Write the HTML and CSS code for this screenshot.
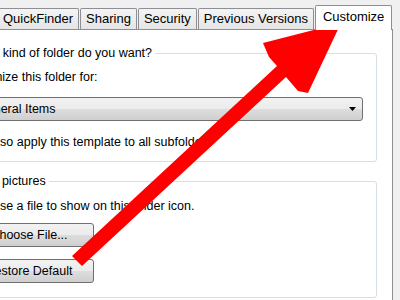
FILE: index.html
```html
<!DOCTYPE html>
<html>
<head>
<meta charset="utf-8">
<title>Customize</title>
<link rel="stylesheet" href="styles.css">
</head>
<body>
<div class="tabs">
  <div class="tab">QuickFinder</div>
  <div class="tab">Sharing</div>
  <div class="tab">Security</div>
  <div class="tab">Previous Versions</div>
  <div class="tab tab-active">Customize</div>
</div>
<div class="panel">
  <fieldset class="group group-kind">
    <legend class="legend legend-kind">What kind of folder do you want?</legend>
    <div class="label">Optimize this folder for:</div>
    <div class="combo">
      <span>General Items</span>
      <svg class="combo-arrow" width="7" height="4" viewBox="0 0 7 4"><polygon points="0,0 7,0 3.5,4" fill="#000"/></svg>
    </div>
    <div class="check"><span class="box"></span>Also apply this template to all subfolders</div>
  </fieldset>
  <fieldset class="group group-pics">
    <legend class="legend legend-pics">Folder pictures</legend>
    <div class="hint">Choose a file to show on this folder icon.</div>
    <button class="btn btn-first">Choose File...</button>
    <button class="btn btn-second">Restore Default</button>
  </fieldset>
</div>
<svg class="arrow" width="400" height="300" viewBox="0 0 400 300">
  <polygon points="341,23 263,43 269,57 277,66 72,256 82,266 286,77 298,91 308,93" fill="#ff0000"/>
</svg>
</body>
</html>
```
FILE: styles.css
```css
html, body {
  margin: 0;
}
body {
  position: relative;
  width: 400px;
  height: 300px;
  overflow: hidden;
  background: #f0f0f0;
  font-family: "Liberation Sans", Arial, sans-serif;
  font-size: 12.5px;
  color: #000;
}
.tabs {
  display: flex;
  align-items: flex-end;
  gap: 1px;
  height: 24px;
  padding-top: 5px;
  margin-left: -3px;
}
.tab {
  font-size: 13px;
  line-height: 20px;
  padding: 0 5px;
  border: 1px solid #8e8f94;
  border-bottom: 0;
  border-radius: 2px 2px 0 0;
  background: linear-gradient(#f4f4f4, #e5e5e5);
  white-space: nowrap;
}
.tab-active {
  position: relative;
  z-index: 1;
  background: #fff;
  padding: 0 7px 2px;
  line-height: 22px;
  margin-bottom: -1px;
}
.panel {
  box-sizing: border-box;
  width: 441px;
  margin-left: -48px;
  border: 1px solid #8e8f94;
  border-bottom: 0;
  background: #fff;
  padding: 16px 15px 2px 8px;
}
.group {
  margin: 0;
  padding: 0 0 11px;
  min-width: 0;
  border: 1px solid #d5dfe5;
  border-radius: 3px;
}
.group-pics {
  margin-top: 12px;
  padding-bottom: 14px;
}
.legend {
  padding: 0 3px;
  line-height: 15px;
}
.legend-kind {
  margin-left: 5px;
}
.legend-pics {
  margin-left: -2px;
}
.label {
  line-height: 15px;
  margin: 9px 0 0 7px;
}
.combo {
  box-sizing: border-box;
  height: 24px;
  margin: 12px 13px 0 10px;
  padding: 0 6px 0 4px;
  display: flex;
  align-items: center;
  justify-content: space-between;
  border: 1px solid #707070;
  border-radius: 3px;
  background: linear-gradient(#f2f2f2 0%, #ebebeb 48%, #dddddd 52%, #cfcfcf 100%);
}
.combo-arrow {
  display: block;
}
.check {
  display: flex;
  align-items: center;
  line-height: 15px;
  margin: 14px 0 0 10px;
}
.box {
  box-sizing: border-box;
  width: 13px;
  height: 13px;
  margin-right: 4px;
  border: 1px solid #8f8f8f;
  background: linear-gradient(#e6e6e6, #ffffff);
}
.hint {
  line-height: 15px;
  margin: 10px 0 0 8px;
}
.btn {
  display: block;
  box-sizing: border-box;
  width: 130px;
  height: 24px;
  padding: 0;
  margin-left: 2px;
  font: inherit;
  color: #000;
  border: 1px solid #707070;
  border-radius: 3px;
  background: linear-gradient(#f2f2f2 0%, #ebebeb 48%, #dddddd 52%, #cfcfcf 100%);
}
.btn-first {
  margin-top: 9px;
}
.btn-second {
  margin-top: 12px;
}
.arrow {
  position: absolute;
  top: 0;
  left: 0;
  pointer-events: none;
}
```
